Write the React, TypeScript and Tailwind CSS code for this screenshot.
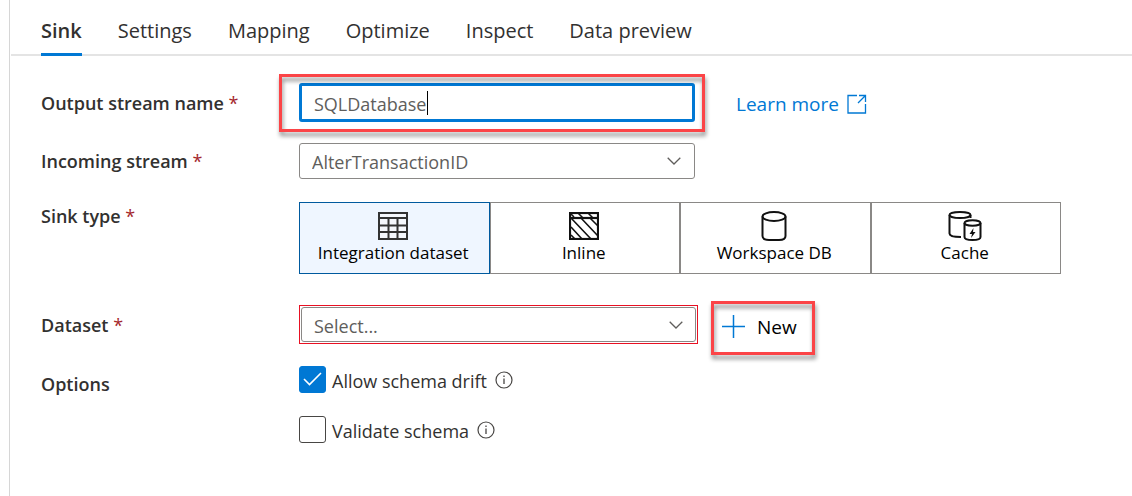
import { useState, type ReactNode } from 'react';

const tabs = ['Sink', 'Settings', 'Mapping', 'Optimize', 'Inspect', 'Data preview'];

function TableIcon() {
  return (
    <svg width="30" height="28" viewBox="0 0 30 28" fill="none" stroke="#333" aria-hidden="true">
      <rect x="1" y="1" width="28" height="26" strokeWidth="2" fill="#f4f7fc" />
      <path d="M1 6H29M1 13.5H29M1 20H29" strokeWidth="2.2" />
      <path d="M10.5 6V27M19.5 6V27" strokeWidth="2" />
    </svg>
  );
}

function InlineIcon() {
  return (
    <svg width="30" height="28" viewBox="0 0 30 28" fill="none" stroke="#111" aria-hidden="true">
      <rect x="1" y="1" width="28" height="26" strokeWidth="2.2" />
      <path d="M1 6H29" strokeWidth="2.2" />
      <path
        d="M9 1L14 6M19 1L24 6M2 15L13 27M2 6L22 27M12 6L29 24M21 6L29 14M2 23L6 27M2 2L5 5"
        strokeWidth="1.6"
      />
    </svg>
  );
}

function DatabaseIcon() {
  return (
    <svg width="26" height="30" viewBox="0 0 26 30" fill="none" stroke="#111" strokeWidth="2" aria-hidden="true">
      <ellipse cx="13" cy="5.5" rx="11.5" ry="4.5" />
      <path d="M1.5 5.5V25C1.5 27.8 4.5 29 8 29H18C21.500 29 24.500 27.800 24.500 25V5.500" />
    </svg>
  );
}

function CacheIcon() {
  return (
    <svg width="34" height="30" viewBox="0 0 34 30" fill="none" stroke="#111" strokeWidth="2" aria-hidden="true">
      <ellipse cx="12" cy="4" rx="10.5" ry="3" />
      <path d="M1.5 4V22.5C1.5 25 6 26 13 26M22.5 4V7" />
      <ellipse cx="24.5" cy="12" rx="8" ry="2.8" />
      <path d="M16.5 12V26C16.5 28 19.5 29 24.5 29S32.5 28 32.5 26V12" />
      <path d="M25.5 17L21.5 23H24L23 27L27.5 21H25Z" fill="#111" stroke="none" />
    </svg>
  );
}

function Chevron() {
  return (
    <svg
      className="pointer-events-none absolute top-1/2 right-3.5 -translate-y-1/2"
      width="14"
      height="8"
      viewBox="0 0 14 8"
      fill="none"
      stroke="#605e5c"
      strokeWidth="1.3"
      aria-hidden="true"
    >
      <path d="M0.7 0.8L7 7L13.3 0.8" />
    </svg>
  );
}

function InfoIcon() {
  return (
    <svg width="18" height="18" viewBox="0 0 18 18" fill="none" stroke="#484644" aria-hidden="true">
      <circle cx="9" cy="9" r="8" strokeWidth="1.2" />
      <path d="M9 7.5V13M9 4.5V6" strokeWidth="1.3" />
    </svg>
  );
}

function Callout({ className }: { className: string }) {
  return (
    <span
      className={`pointer-events-none absolute border-3 border-[#fb4447] drop-shadow-[1px_4px_2px_rgba(0,0,0,0.45)] ${className}`}
    />
  );
}

function RowLabel({ htmlFor, children, required }: { htmlFor?: string; children: ReactNode; required?: boolean }) {
  return (
    <label htmlFor={htmlFor} className="w-[258px] shrink-0 font-semibold">
      {children}
      {required && <span className="font-normal text-[#a4262c]"> *</span>}
    </label>
  );
}

const sinkTypes = [
  { name: 'Integration dataset', icon: <TableIcon /> },
  { name: 'Inline', icon: <InlineIcon /> },
  { name: 'Workspace DB', icon: <DatabaseIcon /> },
  { name: 'Cache', icon: <CacheIcon /> },
];

export default function App() {
  const [tab, setTab] = useState('Sink');
  const [name, setName] = useState('SQLDatabase');
  const [sink, setSink] = useState('Integration dataset');
  const [options, setOptions] = useState([
    { label: 'Allow schema drift', checked: true },
    { label: 'Validate schema', checked: false },
  ]);
  const toggle = (label: string) =>
    setOptions(options.map((o) => (o.label === label ? { ...o, checked: !o.checked } : o)));

  return (
    <div className="min-h-screen bg-white pl-[9px] font-['Open_Sans','Noto_Sans',sans-serif] text-[18px] leading-7 text-[#323130]">
      <main className="min-h-screen border-l border-[#d6d6d6] pl-px">
        <nav className="flex h-14 gap-9 border-b-2 border-[#e4e4e4] pl-[30px] text-[20px]" role="tablist">
          {tabs.map((t) => (
            <button
              key={t}
              role="tab"
              aria-selected={t === tab}
              onClick={() => setTab(t)}
              className={
                t === tab
                  ? '-mb-0.5 border-b-3 border-[#0078d4] pt-2 font-semibold whitespace-nowrap'
                  : '-mb-0.5 border-b-3 border-transparent pt-2 whitespace-nowrap'
              }
            >
              {t}
            </button>
          ))}
        </nav>

        <form className="pt-[27px] pr-4 pl-[30px]" onSubmit={(e) => e.preventDefault()}>
          <div className="flex items-center">
            <RowLabel htmlFor="stream-name" required>
              Output stream name
            </RowLabel>
            <div className="relative w-[396px]">
              <input
                id="stream-name"
                value={name}
                onChange={(e) => setName(e.target.value)}
                className="block h-[39px] w-full rounded-[3px] border-3 border-[#0078d4] px-3 pt-0.5 text-[#605e5c] outline-none"
              />
              <span className="absolute top-2 left-32 h-6 w-px bg-black" />
              <Callout className="-top-[9px] -right-2.5 -bottom-2.5 -left-5" />
            </div>
            <a
              href="#learn-more"
              className="ml-[41px] flex items-center gap-2 pt-0.5 text-[19px] whitespace-nowrap text-[#0078d4]"
            >
              Learn more
              <svg width="20" height="20" viewBox="0 0 20 20" fill="none" stroke="#0078d4" strokeWidth="1.3" aria-hidden="true">
                <path d="M10 1.5H1V19H18.5V10M12 1.5H18.5V8M18.5 1.5L11 9" />
              </svg>
            </a>
          </div>

          <div className="mt-[21px] flex items-center">
            <RowLabel htmlFor="incoming" required>
              Incoming stream
            </RowLabel>
            <div className="relative w-[396px]">
              <select
                id="incoming"
                className="block h-9 w-full appearance-none rounded-[3px] border border-[#8a8886] bg-white px-3 pt-0.5 text-[#605e5c]"
              >
                <option>AlterTransactionID</option>
              </select>
              <Chevron />
            </div>
          </div>

          <div className="mt-[23px] flex items-start">
            <RowLabel required>Sink type</RowLabel>
            <div role="radiogroup" aria-label="Sink type" className="grid w-full max-w-[762px] grid-cols-4">
              {sinkTypes.map(({ name: n, icon }) => (
                <label
                  key={n}
                  className={`relative flex h-18 cursor-pointer flex-col items-center border pt-2 pr-0.5 text-[17px] text-black ${
                    n === sink ? 'border-[#005a9e] bg-[#eff6ff]' : 'border-[#8a8886] bg-white'
                  }`}
                >
                  <input
                    type="radio"
                    name="sink-type"
                    className="sr-only"
                    checked={n === sink}
                    onChange={() => setSink(n)}
                  />
                  <span className="flex h-[30px] items-center">{icon}</span>
                  <span className="leading-6 whitespace-nowrap">{n}</span>
                </label>
              ))}
            </div>
          </div>

          <div className="mt-[31px] flex items-center">
            <RowLabel htmlFor="dataset" required>
              Dataset
            </RowLabel>
            <div className="relative w-[399px] border border-[#e81123] p-px">
              <select
                id="dataset"
                className="block h-[35px] w-full appearance-none rounded-[3px] border border-[#8a8886] bg-white px-3 pt-0.5 text-[#605e5c]"
              >
                <option>Select...</option>
              </select>
              <Chevron />
            </div>
            <button type="button" className="relative ml-6 flex items-center gap-3 pt-1 text-[19px] text-black">
              <svg width="23" height="23" viewBox="0 0 23 23" stroke="#0078d4" strokeWidth="1.5" aria-hidden="true">
                <path d="M11.5 0V23M0 11.5H23" />
              </svg>
              New
              <Callout className="-top-2 -right-[18px] -bottom-3.5 -left-[11px]" />
            </button>
          </div>

          <div className="mt-[22px] flex items-start">
            <div className="w-[258px] shrink-0 pt-1 font-semibold">Options</div>
            <div className="flex flex-col gap-[23px]">
              {options.map(({ label, checked }) => (
                <div key={label} className="flex items-center gap-2">
                  <label className="flex h-[27px] cursor-pointer items-center gap-1.5">
                    <span className="relative block size-[27px]">
                      <input
                        type="checkbox"
                        checked={checked}
                        onChange={() => toggle(label)}
                        className="block size-[27px] appearance-none rounded-[3px] border border-[#484644] bg-white checked:border-[#0078d4] checked:bg-[#0078d4]"
                      />
                      {checked && (
                        <svg
                          className="pointer-events-none absolute top-1.5 left-1"
                          width="19"
                          height="14"
                          viewBox="0 0 19 14"
                          fill="none"
                          stroke="#fff"
                          strokeWidth="1.6"
                          aria-hidden="true"
                        >
                          <path d="M1 7L6.5 12.5L18 1" />
                        </svg>
                      )}
                    </span>
                    <span className="pt-0.5">{label}</span>
                  </label>
                  <InfoIcon />
                </div>
              ))}
            </div>
          </div>
        </form>
      </main>
    </div>
  );
}
